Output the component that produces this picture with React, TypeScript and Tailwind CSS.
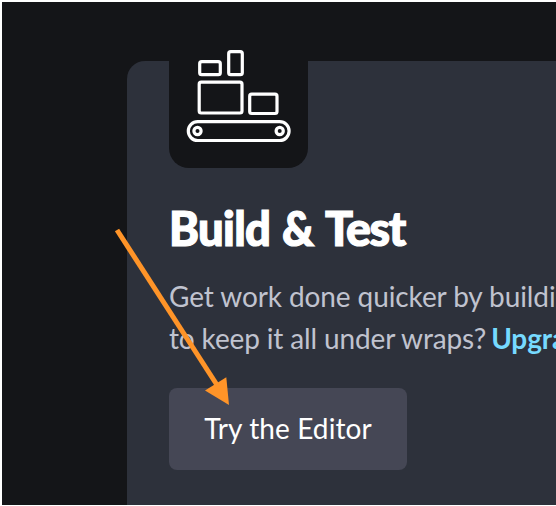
import React from "react";

function ConveyorIcon() {
  return (
    <svg width="139" height="126" viewBox="169 42 139 126" fill="none" stroke="#fff" strokeWidth="3.2">
      <rect x="199.7" y="61.7" width="20.6" height="13" rx="2" />
      <rect x="228.7" y="51.7" width="13.6" height="23" rx="2" />
      <rect x="199.2" y="82.2" width="42.8" height="30.8" rx="2" />
      <rect x="249.7" y="94.2" width="27.3" height="19.3" rx="2" />
      <rect x="188.3" y="121.7" width="100.8" height="18.8" rx="9.4" />
      <circle cx="197.5" cy="131" r="3.6" />
      <circle cx="279.7" cy="131" r="3.6" />
    </svg>
  );
}

function Arrow() {
  return (
    <svg className="pointer-events-none absolute left-0 top-0" width="556" height="506" viewBox="0 0 556 506">
      <path d="M117 230L217 385" stroke="#ff9428" strokeWidth="5" />
      <path d="M229 405L205 390.5L226.3 377.3Z" fill="#ff9428" />
    </svg>
  );
}

export default function App() {
  return (
    <div className="relative h-[506px] w-[556px] overflow-hidden bg-white pb-px pl-0.5 pt-0.5 font-['Lato',sans-serif]">
      <div className="h-[503px] overflow-hidden bg-[#141518] pl-[125px] pt-[59px]">
        <section className="flex h-[460px] w-[640px] flex-col items-start rounded-tl-[18px] bg-[#2d313b] pl-[42px]">
          <div className="-mt-[19px] h-[126px] w-[139px] shrink-0 rounded-b-[20px] bg-[#141518]">
            <ConveyorIcon />
          </div>
          <h2 className="mt-[30px] flex h-[60px] shrink-0 whitespace-nowrap text-[47.5px] font-black leading-[60px] text-white [-webkit-text-stroke:1.2px_#fff]">
            <span className="w-[113px]">
              <span className="inline-block origin-left scale-x-[0.955] tracking-[-0.7px]">Build </span>
            </span>
            <span className="w-[43px]">
              <span className="inline-block origin-left scale-x-[0.93]">&amp;</span>
            </span>
            <span className="inline-block origin-left scale-x-[0.98] tracking-[-1.5px]"> Test</span>
          </h2>
          <p className="mt-[17px] shrink-0 whitespace-nowrap text-[28px] leading-[42px] tracking-[-0.1px] text-[#c0c3cf]">
            Get work done quicker by building out
            <br />
            <span className="tracking-[-0.14px]">to keep it all under wraps? </span>
            <a className="-ml-[2px] font-bold text-[#76daff]">Upgrade</a>
          </p>
          <button className="mt-[29px] flex h-[82px] w-[238px] shrink-0 items-center justify-center rounded-lg bg-[#454755] pb-0.5 text-[28px] tracking-[0.1px] text-white">
            Try the Editor
          </button>
        </section>
      </div>
      <Arrow />
    </div>
  );
}
